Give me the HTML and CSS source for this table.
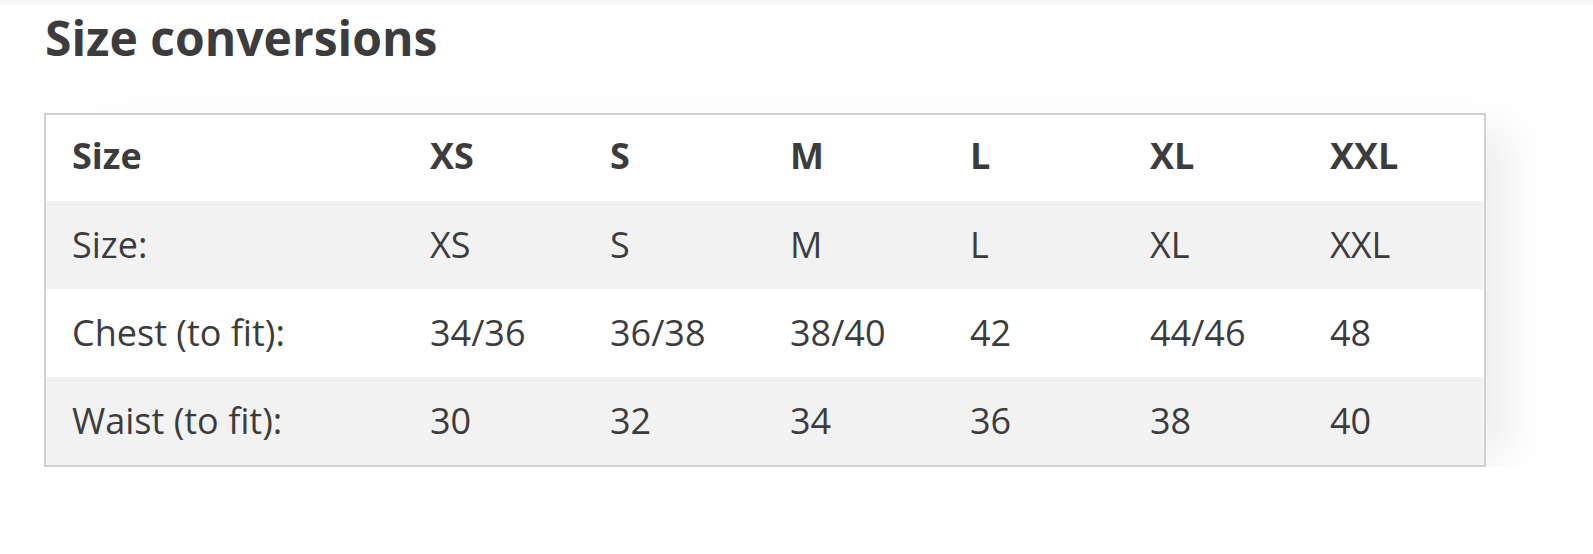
FILE: index.html
```html
<!DOCTYPE html>
<html lang="en">
<head>
<meta charset="utf-8">
<title>Size conversions</title>
<link rel="stylesheet" href="styles.css">
</head>
<body>
<div class="topbar"></div>
<main class="page">
  <h2 class="title">Size conversions</h2>
  <div class="table-wrap">
    <table class="sizes">
      <colgroup>
        <col class="c-label">
        <col class="c-val"><col class="c-val"><col class="c-val">
        <col class="c-val"><col class="c-val"><col class="c-val">
      </colgroup>
      <thead>
        <tr><th>Size</th><th>XS</th><th>S</th><th>M</th><th>L</th><th>XL</th><th>XXL</th></tr>
      </thead>
      <tbody>
        <tr><td>Size:</td><td>XS</td><td>S</td><td>M</td><td>L</td><td>XL</td><td>XXL</td></tr>
        <tr><td>Chest (to fit):</td><td>34/36</td><td>36/38</td><td>38/40</td><td>42</td><td>44/46</td><td>48</td></tr>
        <tr><td>Waist (to fit):</td><td>30</td><td>32</td><td>34</td><td>36</td><td>38</td><td>40</td></tr>
      </tbody>
    </table>
  </div>
</main>
</body>
</html>
```
FILE: styles.css
```css
html, body {
  margin: 0;
  padding: 0;
  background: #ffffff;
}
body {
  font-family: "Open Sans", "Noto Sans", sans-serif;
  color: #3c3c3e;
}
.topbar {
  height: 5px;
  background: #f6f6f6;
}
.page {
  padding: 0 0 0 44px;
}
.title {
  margin: 9px 0 0 0;
  padding-left: 1px;
  font-size: 48px;
  line-height: 48px;
  font-weight: 700;
  color: #3c3c3e;
}
.table-wrap {
  margin-top: 51px;
  width: 1442px;
  box-shadow: 36px 4px 40px -12px rgba(0, 0, 0, 0.07);
}
.sizes {
  width: 1442px;
  border-collapse: separate;
  border-spacing: 0;
  border: 2px solid #d0d0d0;
  table-layout: fixed;
  background: #ffffff;
}
.c-label { width: 358px; }
.c-val { width: 180px; }
.sizes th,
.sizes td {
  height: 88px;
  padding: 0 0 0 26px;
  text-align: left;
  vertical-align: middle;
  font-size: 36px;
  line-height: 40px;
  white-space: nowrap;
}
.sizes th {
  height: 82px;
  padding-bottom: 4px;
  font-weight: 700;
}
.sizes td {
  font-weight: 400;
}
.sizes tbody tr:nth-child(odd) td {
  background: #f2f2f2;
}
```
